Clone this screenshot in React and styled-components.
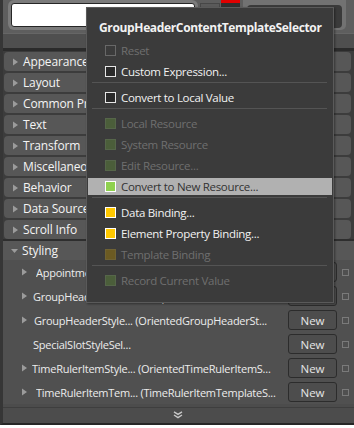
import styled, { createGlobalStyle } from "styled-components";

const GlobalStyle = createGlobalStyle`
  html, body {
    margin: 0;
    padding: 0;
    background: #ffffff;
  }
  body {
    font-family: "Open Sans", "Noto Sans", sans-serif;
  }
`;

const categories = [
  "Appearance",
  "Layout",
  "Common Properties",
  "Text",
  "Transform",
  "Miscellaneous",
  "Behavior",
  "Data Source",
  "Scroll Info",
];

// x is where the label starts in the panel
const stylingRows = [
  { label: "AppointmentStyleSelector", x: 36, arrow: true },
  { label: "GroupHeaderContentTemplateSelector", x: 33, arrow: true },
  { label: "GroupHeaderStyle... (OrientedGroupHeaderSt...", x: 34, arrow: true },
  { label: "SpecialSlotStyleSel...", x: 33, arrow: false },
  { label: "TimeRulerItemStyle... (OrientedTimeRulerItemS...", x: 32, arrow: true },
  { label: "TimeRulerItemTem... (TimeRulerItemTemplateS...", x: 36, arrow: true },
];

const menu = [
  { type: "item", label: "Reset", box: "empty", disabled: true },
  { type: "item", label: "Custom Expression...", box: "plain" },
  { type: "sep" },
  { type: "item", label: "Convert to Local Value", box: "plain" },
  { type: "sep" },
  { type: "item", label: "Local Resource", box: "green", disabled: true },
  { type: "item", label: "System Resource", box: "green", disabled: true },
  { type: "item", label: "Edit Resource...", box: "green", disabled: true },
  { type: "item", label: "Convert to New Resource...", box: "lime", active: true },
  { type: "sep" },
  { type: "item", label: "Data Binding...", box: "yellow" },
  { type: "item", label: "Element Property Binding...", box: "yellow" },
  { type: "item", label: "Template Binding", box: "olive", disabled: true },
  { type: "sep" },
  { type: "item", label: "Record Current Value", box: "green", disabled: true },
];

const boxColors = {
  empty: { fill: "#3b3b3b", border: "#686868" },
  plain: { fill: "#2a2a2a", border: "#e6e6e6" },
  green: { fill: "#4b5e3a", border: "#56664a" },
  lime: { fill: "#8fd14f", border: "#ffffff" },
  yellow: { fill: "#ffc800", border: "#ffffff" },
  olive: { fill: "#6b5a22", border: "#6f6233" },
};

const Arrow = ({ down }) => (
  <ArrowIcon width="7" height="8" viewBox="0 0 7 8">
    {down ? <path d="M0 2 L7 2 L3.5 6 Z" /> : <path d="M1 0.5 L6 4 L1 7.5 Z" />}
  </ArrowIcon>
);

const App = () => {
  return (
    <>
      <GlobalStyle />
      <Panel>
        <TopBar>
          <SearchInput />
          <GrayButton />
          <Swatch />
          <DarkFrame>
            <DarkBox />
          </DarkFrame>
        </TopBar>
        <Band />
        <Rule />
        <CategoryList>
          {categories.map((name) => (
            <CategoryRow key={name}>
              <Arrow />
              <CategoryLabel>{name}</CategoryLabel>
            </CategoryRow>
          ))}
        </CategoryList>
        <ThickRule />
        <StylingGroup>
          <CategoryRow $flat>
            <Arrow down />
            <CategoryLabel>Styling</CategoryLabel>
          </CategoryRow>
          {stylingRows.map((row) => (
            <SubRow key={row.label}>
              <ArrowSlot>{row.arrow && <Arrow />}</ArrowSlot>
              <SubLabel $x={row.x}>{row.label}</SubLabel>
              <NewButton>New</NewButton>
              <Marker />
            </SubRow>
          ))}
        </StylingGroup>
        <Footer>
          <svg width="10" height="8" viewBox="0 0 10 8">
            <path d="M1 0.8 L5 3.4 L9 0.8" fill="none" stroke="#c8c8c8" strokeWidth="1.4" />
            <path d="M1 4 L5 6.6 L9 4" fill="none" stroke="#c8c8c8" strokeWidth="1.4" />
          </svg>
        </Footer>

        <Popup>
          <PopupTitle>GroupHeaderContentTemplateSelector</PopupTitle>
          {menu.map((entry, i) =>
            entry.type === "sep" ? (
              <Separator key={i} />
            ) : (
              <MenuItem key={i}>
                <MenuInner $active={entry.active}>
                  <CheckBox $kind={entry.box} />
                  <MenuLabel $disabled={entry.disabled} $active={entry.active}>
                    {entry.label}
                  </MenuLabel>
                </MenuInner>
              </MenuItem>
            )
          )}
        </Popup>
      </Panel>
    </>
  );
};

export default App;

const Panel = styled.div`
  position: relative;
  width: 351px;
  height: 423px;
  background: #4c4c4c;
  border-left: 3px solid #363636;
  border-bottom: 2px solid #262626;
  display: flex;
  flex-direction: column;
  overflow: hidden;
`;

const TopBar = styled.div`
  height: 33px;
  box-sizing: border-box;
  padding: 3px 6px 0 5px;
  background: #5e5e5e;
  display: flex;
  align-items: flex-start;
`;

const SearchInput = styled.div`
  width: 182px;
  height: 22px;
  background: #ffffff;
  border: 1px solid #262626;
  border-radius: 3px;
  box-shadow: 0 0 0 3px #7b7b7b;
  margin-left: 3px;
`;

const GrayButton = styled.div`
  width: 18px;
  height: 22px;
  margin-left: 5px;
  background: #5a5a5a;
  border: 1px solid #474747;
`;

const Swatch = styled.div`
  width: 19px;
  height: 24px;
  margin-top: -3px;
  margin-left: 1px;
  background: #2f2f2f;
  border-top: 3px solid #e00000;
`;

const DarkFrame = styled.div`
  margin-left: 3px;
  width: 103px;
  height: 30px;
  margin-top: -3px;
  box-sizing: border-box;
  padding: 5px 4px 2px 4px;
  background: #727272;
  border-radius: 0 0 5px 5px;
`;

const DarkBox = styled.div`
  height: 23px;
  background: #3a3a3a;
  border-radius: 4px;
`;

const Band = styled.div`
  height: 15px;
  background: #4f4f4f;
  border-top: 1px solid #666666;
  box-sizing: border-box;
`;

const Rule = styled.div`
  height: 3px;
  background: #2b2b2b;
`;

const ThickRule = styled.div`
  height: 2px;
  background: #2e2e2e;
`;

const CategoryList = styled.div`
  display: flex;
  flex-direction: column;
  gap: 2px;
  padding: 1px 3px 0 1px;
  background: #3c3c3c;
`;

const CategoryRow = styled.div`
  height: 19px;
  display: flex;
  align-items: center;
  padding-left: 8px;
  background: #575757;
  border-radius: ${(p) => (p.$flat ? "0" : "4px")};
`;

const ArrowIcon = styled.svg`
  fill: #9b9b9b;
  flex: none;
`;

const CategoryLabel = styled.span`
  margin-left: 4px;
  font-size: 12px;
  letter-spacing: -0.15px;
  color: #f4f4f4;
  white-space: nowrap;
`;

const StylingGroup = styled.div`
  display: flex;
  flex-direction: column;
  background: #505050;
`;

const SubRow = styled.div`
  height: 24px;
  display: flex;
  align-items: center;
  padding-left: 18px;
  padding-right: 5px;
`;

const ArrowSlot = styled.div`
  width: 7px;
  flex: none;
  display: flex;
  align-items: center;
`;

const SubLabel = styled.span`
  flex: 1;
  margin-left: ${(p) => p.$x - 28}px;
  font-size: 11px;
  letter-spacing: -0.25px;
  color: #ececec;
  white-space: nowrap;
  overflow: hidden;
`;

const NewButton = styled.div`
  width: 47px;
  height: 18px;
  flex: none;
  display: flex;
  align-items: center;
  justify-content: center;
  border: 1px solid #2c2c2c;
  border-radius: 3px;
  background: #4d4d4d;
  font-size: 11.5px;
  color: #e6e6e6;
`;

const Marker = styled.div`
  width: 5px;
  height: 5px;
  margin-left: 5px;
  border: 1px solid #7a7a7a;
  flex: none;
`;

const Footer = styled.div`
  height: 14px;
  margin-top: 3px;
  border-top: 1px solid #3e3e3e;
  background: #4c4c4c;
  display: flex;
  align-items: center;
  justify-content: center;
  padding-right: 2px;
`;

const Popup = styled.div`
  position: absolute;
  left: 83px;
  top: 7px;
  width: 244px;
  height: 294px;
  background: #3b3b3b;
  border: 1px solid #5a5a5a;
  box-shadow: 1px 1px 2px rgba(0, 0, 0, 0.4);
  display: flex;
  flex-direction: column;
  padding: 0 1px;
`;

const PopupTitle = styled.div`
  height: 32px;
  padding-left: 11px;
  padding-top: 11px;
  box-sizing: border-box;
  font-size: 12px;
  font-weight: 700;
  letter-spacing: -0.35px;
  color: #f2f2f2;
  white-space: nowrap;
`;

const MenuItem = styled.div`
  height: 21px;
  padding: 2px 0;
  box-sizing: border-box;
`;

const MenuInner = styled.div`
  height: 17px;
  display: flex;
  align-items: center;
  padding-left: 17px;
  background: ${(p) => (p.$active ? "#b1b1b1" : "transparent")};
`;

const CheckBox = styled.div`
  width: 9px;
  height: 9px;
  flex: none;
  background: ${(p) => boxColors[p.$kind].fill};
  border: 1px solid ${(p) => boxColors[p.$kind].border};
`;

const MenuLabel = styled.span`
  margin-left: 5px;
  font-size: 11.5px;
  letter-spacing: -0.3px;
  white-space: nowrap;
  color: ${(p) => (p.$active ? "#333333" : p.$disabled ? "#6f6f6f" : "#f2f2f2")};
`;

const Separator = styled.div`
  height: 1px;
  margin: 0 5px 4px 4px;
  background: #545454;
`;
